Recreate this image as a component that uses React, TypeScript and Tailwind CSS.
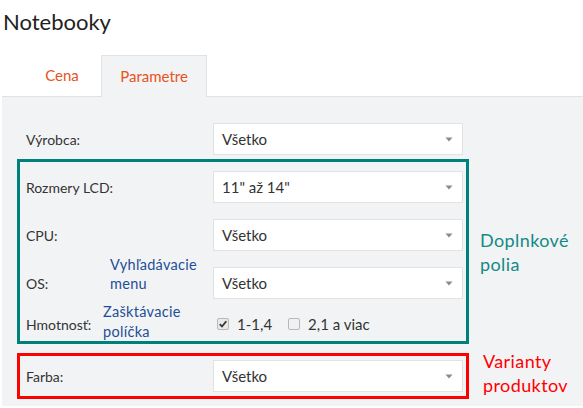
import React from "react";

const Arrow = () => (
  <svg width="8" height="5" viewBox="0 0 8 5" className="shrink-0">
    <path d="M0.5 0.5 L7.5 0.5 L4 4.5 Z" fill="#8a8a8a" />
  </svg>
);

const Select = ({ value }: { value: string }) => (
  <div className="w-[250px] h-[32px] bg-white border border-[#e2e2e2] flex items-center justify-between pl-[8px] pr-[9px] text-[15px] text-[#333]">
    <span>{value}</span>
    <Arrow />
  </div>
);

const Checkbox = ({ checked }: { checked?: boolean }) => (
  <span
    className={
      checked
        ? "w-[12px] h-[12px] rounded-[2px] border border-[#b8b8b8] bg-[#e9e9e9] flex items-center justify-center"
        : "w-[12px] h-[12px] rounded-[2px] border border-[#b8b8b8] bg-[#f1f1f1] flex items-center justify-center"
    }
  >
    {checked && (
      <svg width="10" height="10" viewBox="0 0 10 10">
        <path d="M1.8 5.2 L4 7.5 L8.3 2.2" stroke="#333" strokeWidth="1.8" fill="none" />
      </svg>
    )}
  </span>
);

export default function App() {
  return (
    <div
      className="w-[583px] h-[408px] bg-white text-[#333] overflow-hidden"
      style={{ fontFamily: 'Lato, "Open Sans", sans-serif' }}
    >
      <div className="pl-[3px] pt-[7px] h-[55px] text-[22px] leading-[30px] text-[#222]">Notebooky</div>
      <div className="flex h-[42px] ml-[2px]">
        <div className="w-[21px] border-b border-[#e2e2e2]" />
        <div className="w-[78px] flex items-center justify-center text-[15px] text-[#e8521c] border-b border-[#e2e2e2]">
          Cena
        </div>
        <div className="w-[106px] flex items-center justify-center text-[15px] text-[#e8521c] bg-[#f2f3f5] border border-b-0 border-[#e2e2e2]">
          Parametre
        </div>
        <div className="flex-1 border-b border-[#e2e2e2]" />
      </div>
      <div className="ml-[2px] h-[309px] bg-[#f2f3f5] pl-[15px] pt-[26px] flex flex-col">
        {/* Výrobca */}
        <div className="flex items-center h-[32px] pl-[9px]">
          <div className="w-[187px] text-[14px]">Výrobca:</div>
          <Select value="Všetko" />
        </div>

        {/* Doplnkové polia */}
        <div className="flex items-center mt-[4px]">
          <div className="w-[452px] border-[3px] border-[#00807c] pl-[6px] pt-[9px] pb-[8px] flex flex-col gap-[16px]">
            <div className="flex items-center h-[32px]">
              <div className="w-[187px] text-[14px]">Rozmery LCD:</div>
              <Select value={'11" až 14"'} />
            </div>
            <div className="flex items-center h-[32px]">
              <div className="w-[187px] text-[14px]">CPU:</div>
              <Select value="Všetko" />
            </div>
            <div className="flex items-center h-[32px]">
              <div className="w-[187px] flex items-center text-[14px]">
                <span className="w-[84px]">OS:</span>
                <span className="flex flex-col text-[#1d4f94] text-[14.5px] leading-[19px] mb-[18px] tracking-[0.3px]">
                  <span>Vyhľadávacie</span>
                  <span>menu</span>
                </span>
              </div>
              <Select value="Všetko" />
            </div>
            <div className="flex items-center h-[18px]">
              <div className="w-[187px] flex items-center text-[14px]">
                <span className="w-[77px]">Hmotnosť:</span>
                <span className="flex flex-col text-[#1d4f94] text-[14.5px] leading-[20px] mt-[-4px] tracking-[0.3px]">
                  <span>Zašktávacie</span>
                  <span>políčka</span>
                </span>
              </div>
              <div className="flex items-center text-[15px] pl-[4px]">
                <Checkbox checked />
                <span className="ml-[8px]">1-1,4</span>
                <span className="ml-[16px]">
                  <Checkbox />
                </span>
                <span className="ml-[8px]">2,1 a viac</span>
              </div>
            </div>
          </div>
          <div className="ml-[11px] text-[18px] leading-[24px] text-[#128a86] tracking-[0.4px]">
            <div>Doplnkové</div>
            <div>polia</div>
          </div>
        </div>

        {/* Varianty produktov */}
        <div className="flex items-center mt-[9px]">
          <div className="w-[452px] border-[3px] border-[#ff0000] pl-[6px] py-[4px]">
            <div className="flex items-center h-[32px]">
              <div className="w-[187px] text-[14px]">Farba:</div>
              <Select value="Všetko" />
            </div>
          </div>
          <div className="ml-[14px] text-[18px] leading-[24px] text-[#ff0000] tracking-[0.4px] -mt-[6px]">
            <div>Varianty</div>
            <div>produktov</div>
          </div>
        </div>
      </div>
    </div>
  );
}
